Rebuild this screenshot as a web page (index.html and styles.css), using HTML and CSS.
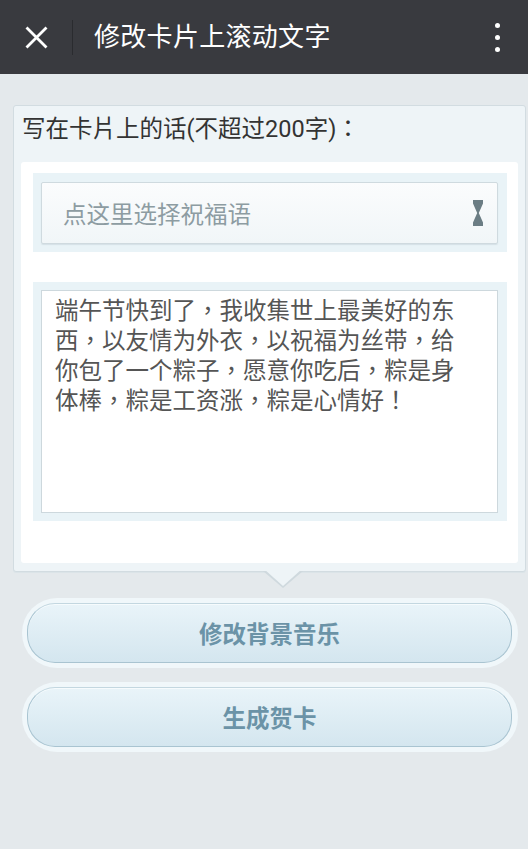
FILE: index.html
```html
<!DOCTYPE html>
<html lang="zh-TW">
<head>
<meta charset="utf-8">
<title>修改卡片上滚动文字</title>
<link rel="stylesheet" href="styles.css">
</head>
<body>
<header class="topbar">
  <div class="close">
    <svg width="23" height="23" viewBox="0 0 23 23"><path d="M1.5 1.5L21.5 21.5M21.5 1.5L1.5 21.5" stroke="#fff" stroke-width="2.8" stroke-linecap="butt"/></svg>
  </div>
  <div class="divider"></div>
  <h1 class="title" lang="zh-CN">修改卡片上滚动文字</h1>
  <div class="more">
    <span class="dot"></span><span class="dot"></span><span class="dot"></span>
  </div>
</header>
<main class="main">
  <section class="panel">
    <div class="label">写在卡片上的话(不超过200字)：</div>
    <div class="sheet">
      <div class="well">
        <div class="select">
          <span class="placeholder" lang="zh-CN">点这里选择祝福语</span>
          <svg class="hourglass" width="10" height="26" viewBox="0 0 10 26"><path d="M0 0H10V3.5L5.8 13L10 22.5V26H0V22.5L4.2 13L0 3.5Z" fill="#6b7d84"/></svg>
        </div>
      </div>
      <div class="well well-text">
        <div class="textbox">端午节快到了，我收集世上最美好的东西，以友情为外衣，以祝福为丝带，给你包了一个粽子，愿意你吃后，粽是身体棒，粽是工资涨，粽是心情好！</div>
      </div>
    </div>
    <div class="pointer"></div>
  </section>
  <div class="actions" lang="zh-CN">
    <div class="btn-ring"><button class="btn">修改背景音乐</button></div>
    <div class="btn-ring"><button class="btn">生成贺卡</button></div>
  </div>
</main>
</body>
</html>
```
FILE: styles.css
```css
* { box-sizing: border-box; }
html, body { margin: 0; padding: 0; }
body {
  width: 528px;
  min-height: 849px;
  background: #e4e9ec;
  font-family: Roboto, "Noto Sans CJK TC", "Noto Sans CJK SC", sans-serif;
}
.topbar {
  height: 74px;
  background: #393a3f;
  display: flex;
  align-items: center;
}
.close {
  width: 72px;
  padding-left: 25px;
  display: flex;
  align-items: center;
  height: 74px;
}
.divider {
  width: 1px;
  height: 35px;
  background: #2a2b2f;
}
.title {
  margin: 0 0 0 21px;
  font-family: Roboto, "Noto Sans CJK SC", sans-serif;
  font-size: 26px;
  font-weight: normal;
  color: #fff;
  line-height: 74px;
  letter-spacing: 0.3px;
}
.more {
  margin-left: auto;
  margin-right: 28px;
  display: flex;
  flex-direction: column;
  gap: 6.5px;
  padding-top: 1px;
}
.dot {
  width: 5.5px;
  height: 5.5px;
  border-radius: 50%;
  background: #fff;
}
.main {
  padding: 31px 2px 0 13px;
}
.panel {
  position: relative;
  background: #eef4f7;
  border: 1px solid #d2dce1;
  border-radius: 3px;
  padding: 0 7px 8px 7px;
  box-shadow: 0 1px 0 #dbe4e8;
}
.label {
  height: 56px;
  line-height: 46px;
  padding-left: 1px;
  font-size: 23.5px;
  color: #333;
}
.sheet {
  background: #fff;
  border-radius: 3px;
  padding: 11px 11px 42px 12px;
}
.well {
  background: #e9f3f7;
  padding: 9px 9px 8px 8px;
}
.well-text {
  margin-top: 30px;
  padding: 8px 9px 8px 8px;
}
.select {
  height: 62px;
  border: 1px solid #cfdadf;
  border-radius: 2px;
  background: linear-gradient(#fbfcfd, #f1f6f8);
  box-shadow: 0 1px 1px rgba(150,170,180,0.25);
  display: flex;
  align-items: center;
  padding: 0 14px 0 21px;
}
.placeholder {
  font-family: Roboto, "Noto Sans CJK SC", sans-serif;
  font-size: 23.5px;
  color: #8d9ca2;
}
.hourglass {
  margin-left: auto;
}
.textbox {
  height: 223px;
  border: 1px solid #cdd8dd;
  background: #fff;
  padding: 5px 20px 0 13px;
  font-size: 23.5px;
  line-height: 30px;
  color: #555;
}
.pointer {
  position: absolute;
  left: 249px;
  top: 100%;
  width: 0;
  height: 0;
  border-left: 20px solid transparent;
  border-right: 20px solid transparent;
  border-top: 17px solid #cfd9de;
}
.pointer::after {
  content: "";
  position: absolute;
  left: -19px;
  top: -19px;
  width: 0;
  height: 0;
  border-left: 19px solid transparent;
  border-right: 19px solid transparent;
  border-top: 17px solid #eef4f7;
}
.actions {
  margin: 26px 8px 0 9px;
  display: flex;
  flex-direction: column;
  gap: 14px;
}
.btn-ring {
  background: #f0f7fa;
  border-radius: 35px;
  padding: 5px 6px 5px 5px;
}
.btn {
  display: block;
  width: 100%;
  height: 60px;
  border: 1px solid #a9c4d1;
  border-top-color: #c3d7e0;
  border-radius: 28px;
  background: linear-gradient(#e9f4f9, #d4e6ef);
  box-shadow: inset 0 1px 0 #f6fbfd;
  font-family: "Noto Sans CJK SC", sans-serif;
  font-size: 23.5px;
  font-weight: bold;
  color: #6b93a7;
  padding: 0;
  cursor: pointer;
}
```
